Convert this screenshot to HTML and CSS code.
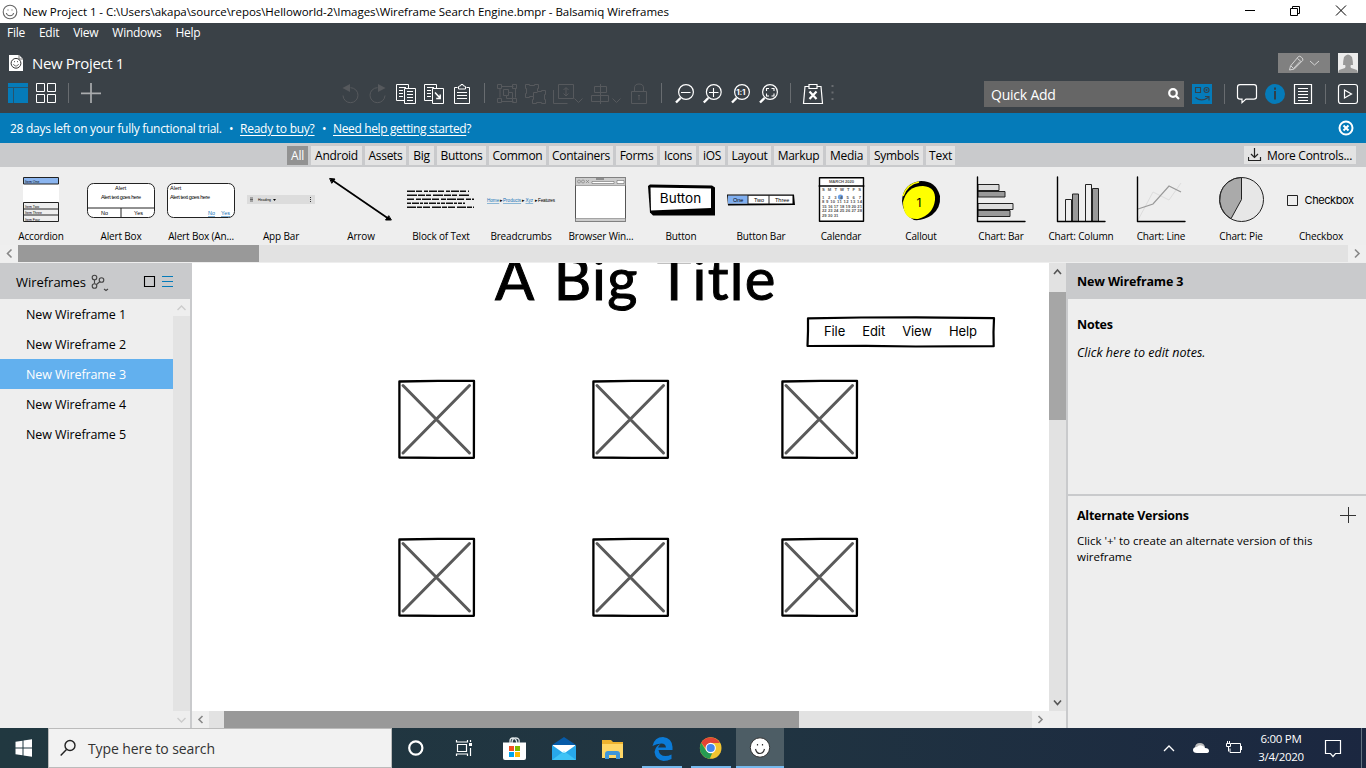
FILE: index.html
```html
<!DOCTYPE html>
<html lang="en">
<head>
<meta charset="utf-8">
<title>New Project 1 - Balsamiq Wireframes</title>
<link rel="stylesheet" href="styles.css">
</head>
<body>
<svg class="defs" width="0" height="0">
  <defs>
    <symbol id="placeholder" viewBox="0 0 78 80"><path class="ink" stroke-width="2.3" fill="#fff" d="M1.400 2.500 40 1.900 76 1.900 75.900 78.800 40 78.800 1.400 78.500Z"/><path d="M5 6.500 71.500 74M71.500 6.500 5 74" fill="none" stroke="#5a5a5a" stroke-width="3" stroke-linecap="round"/></symbol>
    <symbol id="smiley" viewBox="0 0 16 16"><circle cx="8" cy="8" r="6.8"/><path d="M4.300 9c.8 3.600 6.600 3.600 7.400 0M6 5.500v1M10 5.500v1"/></symbol>
  </defs>
</svg>
<div class="app">
  <header class="titlebar">
    <svg class="title-icon" viewBox="0 0 16 16" width="16" height="16"><use href="#smiley" width="16" height="16"/></svg>
    <span class="title-text">New Project 1 - C:\Users\akapa\source\repos\Helloworld-2\Images\Wireframe Search Engine.bmpr - Balsamiq Wireframes</span>
    <svg class="window-buttons" viewBox="1240 0 126 23" width="126" height="23"><path d="M1245 10.500h10M1290.500 8.500h7v7h-7zM1292.500 8v-1.500h7v7H1298M1336 5.500l10 10M1346 5.500l-10 10"/></svg>
  </header>
  <nav class="menubar"><span>File</span><span>Edit</span><span>View</span><span>Windows</span><span>Help</span></nav>
  <div class="project">
    <svg class="doc-icon" viewBox="0 0 14 16" width="14" height="16"><path d="M0 0h10l4 4v12H0z" fill="#fff"/><path d="M10 0v4h4" fill="none" stroke="#777"/><circle cx="7" cy="8.300" r="4.900" fill="none" stroke="#333"/><path d="M4.500 9c.7 2.700 4.300 2.700 5 0M5.500 6v1.200M8.500 6v1.200" fill="none" stroke="#444" stroke-width=".8"/></svg>
    <span class="project-name">New Project 1</span>
    <svg class="user-tools" viewBox="1278 53 80 20" width="80" height="20"><path fill="#808080" d="M1278 53h52v20h-52z"/><g fill="none" stroke="#d5d5d5"><path d="M1289.500 70l1-4 8-9.500q1-1 3 .8t1.300 3l-8.500 8.700zM1297.500 58.500l3.500 3M1291 66l2.500 2.500 6.500-7"/><path d="M1310 61l4.500 4 4.500-4"/></g><path fill="#ececec" d="M1338 53h20v20h-20z"/><path fill="#999" d="M1344 57q4-5 8 0 1 4 1 8h-2q-1 1 0 3l6 2 1 3h-20l1-3 6-2q1-2 0-3h-2q0-4 1-8z"/></svg>
  </div>
  <div class="toolbar">
    <svg class="tools-view" viewBox="8 80 96 28" width="96" height="28"><path fill="#057bb9" d="M8 83h20v20H8z"/><path d="M8 87.500h20M13.500 88v15" stroke="#27536d"/><path fill="none" stroke="#fff" d="M36.500 83.500h8v8h-8zM47.500 83.500h8v8h-8zM36.500 94.500h8v8h-8zM47.500 94.500h8v8h-8z"/><path d="M68.500 83v20" stroke="#686c70"/><path d="M81 93.300h20M91 83v20" stroke="#aaacae" stroke-width="1.700"/></svg>
    <svg class="tools-edit" viewBox="340 80 500 28" width="500" height="28">
      <g class="faint"><path d="M343 95.500a7.500 7.500 0 1 0 7.500-7.800M385 95.500a7.500 7.500 0 1 1-7.500-7.800"/><path fill="#56595d" stroke="none" d="M350 84v8l-7.500-4zM378 84v8l7.500-4z"/></g>
      <g class="line"><path d="M404 100.500h-7.500v-16h12v4M399 87.500h7M399 90.500h4M399 93.500h4M399 96.500h4M404.500 88.500h11v15h-11zM407 91.500h6M407 94.500h6M407 97.500h6M407 100.500h6"/><path d="M432 100.500h-7.500v-16h12v4M427 87.500h7M427 90.500h4M427 93.500h4M427 96.500h4M432.500 88.500h11v15h-11z"/><path stroke-width="1.500" d="M435 92.500l5 5.500M440.200 94.500v4h-4"/><path d="M457.500 87.500h-3v16h15v-16h-3M458.500 86.500l2.500-1v-1h2v1l2.500 1v2.500h-7zM457 92.500h10M457 95.500h10M457 98.500h10"/></g>
      <path class="sep" d="M484.500 83v20M661.500 83v20M790.500 83v20"/>
      <g class="faint"><path d="M501.500 86.500h12M500 88.500v9M515.500 88.500v9M501.500 101.500h12M497.500 84.500h4v4h-4zM512.500 84.500h4v4h-4zM497.500 98.500h4v4h-4zM512.500 98.500h4v4h-4zM503.500 89.500h5v3h4v6h-6v-3h-3zM508.500 92.500v3h-2"/><path d="M525.500 84.500h4v1h5v-1h4v4h-1v3h4v-1h4v4h-1v5h1v4h-4v-1h-5v1h-4v-4h1v-3h-4v1h-4v-4h1v-5h-1zM533.500 96.500v-4h4"/><path d="M558.500 84.500h15v14h-15zM553.500 90v13.500h14M566 88v7M563.500 90l2.500-2.500 2.500 2.500M563.500 93.500l2.500 2.500 2.500-2.500M574.500 98.500l4 4 4-4"/><path d="M600.500 84v20M594.500 86.500h12v6h-12zM591.500 95.500h17v6h-17zM612.500 98.500l4 4 4-4M631.500 91.500h15v12h-15zM634.500 91v-3q0-4 4.500-4t4.500 4v3M639 96v4M638 95.500h2"/></g>
      <g class="line glass"><circle cx="686" cy="92" r="7.400"/><circle cx="713.800" cy="92" r="7.400"/><circle cx="742" cy="92" r="7.400"/><circle cx="770" cy="92" r="7.400"/><path stroke-width="1.100" d="M681 92.500h9.500M709 92.500h9.500M713.500 88v9M766.500 91v-2.500h2.500M771.500 88.500h2.500v2.500M774 93.500v2.500h-2.500M769 96h-2.500v-2.500"/><path stroke-width="2.400" d="M680.500 98l-4.500 4.500M708.300 98l-4.500 4.500M736.500 98l-4.500 4.500M764.500 98l-4.500 4.500"/></g><text x="736.300" y="95" class="one-one">1:1</text>
      <g class="line"><path stroke-width="1.200" d="M809 86.500h-4l-1.500 17h19L821 86.500h-4M809 84.500h8v4h-8z"/><path stroke-width="2.200" d="M809.500 91.500l7 7.500M816.500 91.500l-7 7.500"/></g><path d="M832.500 85v15" stroke="#686c70" stroke-width="2" stroke-dasharray="2 4.500"/>
    </svg>
    <div class="quick-add"><span>Quick Add</span><svg width="12" height="14" viewBox="0 0 12 14"><circle cx="5" cy="6" r="3.800"/><path d="M8 9l3 3"/></svg></div>
    <svg class="tools-right" viewBox="1192 80 166 28" width="166" height="28"><path fill="#057bb9" d="M1192 84h20v20h-20z"/><g fill="none" stroke="#34424b" stroke-width="1.100"><path d="M1195.500 87.500h5v5h-5zM1195.500 97.500q6 5 13.500-.5M1205 96.500h4v4"/><circle cx="1206.500" cy="90" r="2.500"/><circle cx="1206.500" cy="90" r=".5"/></g><path class="sep" d="M1224.500 84v20M1325.500 84v20"/><g fill="none" stroke="#fff" stroke-width="1.200"><path d="M1240 84.600h14q2.500 0 2.500 2.500v10q0 2-2.500 2h-8l-4 3.500v-3.500h-2q-2.500 0-2.500-2v-10q0-2.500 2.500-2.500zM1294.500 84.500h17v19h-17z"/><path stroke-width="1" d="M1298 88.500h10M1298 91.500h10M1298 94.500h10M1298 97.500h10M1298 100.500h10"/><rect x="1338.500" y="84.500" width="19" height="19" rx="2.500"/><path d="M1344.500 90l7 4-7 4z"/></g><circle cx="1275" cy="94" r="10" fill="#057bb9"/><path fill="none" stroke="#303f49" stroke-width="2" d="M1275 87.500v2.200M1275 91v8.500"/></svg>
  </div>
  <div class="trial"><span class="trial-days">28 days left on your fully functional trial.</span><span class="dot">•</span><u class="buy">Ready to buy?</u><span class="dot">•</span><u class="help">Need help getting started</u><span>?</span><svg class="trial-close" width="16" height="16" viewBox="0 0 16 16"><circle cx="8" cy="8" r="6.500"/><path d="M5.500 5.500l5 5M10.500 5.500l-5 5"/></svg></div>
  <div class="categories">
    <span class="tab all">All</span><span class="tab w51">Android</span><span class="tab w41">Assets</span><span class="tab w25">Big</span><span class="tab w49">Buttons</span><span class="tab w57">Common</span><span class="tab w64">Containers</span><span class="tab w41">Forms</span><span class="tab w36">Icons</span><span class="tab w26">iOS</span><span class="tab w43">Layout</span><span class="tab w49">Markup</span><span class="tab w41">Media</span><span class="tab w53">Symbols</span><span class="tab w29">Text</span>
    <span class="more"><svg width="14" height="14" viewBox="0 0 14 14"><path d="M.5 9v3.500h12V9M6.500 0v9M3 6l3.500 3.500L10 6"/></svg>More Controls...</span>
  </div>
  <div class="palette">
    <div class="item"><svg viewBox="0 0 80 58"><path fill="#fff" d="M22 5h36v45H22z"/><path fill="#8bb5ef" class="thin" d="M22.500 5.500h35v6.500h-35z"/><path fill="#eee" class="thin" d="M22.500 30.500h35v19h-35zM22 37h36M22 43h36"/><g class="tiny"><text x="24" y="10.500">Item One</text><text x="24" y="35.500">Item Two</text><text x="24" y="42">Item Three</text><text x="24" y="48.500">Item Four</text></g></svg><span>Accordion</span></div>
    <div class="item"><svg viewBox="0 0 80 58"><rect x="6.500" y="11.500" width="67" height="34" rx="6" fill="#fff" class="thin"/><path class="thin" d="M6.500 36h67M40 36v9"/><g class="small"><text x="34" y="18">Alert</text><text x="20" y="27" textLength="40">Alert text goes here</text><text x="20" y="43">No</text><text x="53" y="43">Yes</text></g></svg><span>Alert Box</span></div>
    <div class="item"><svg viewBox="0 0 80 58"><rect x="6.500" y="11.500" width="67" height="34" rx="6" fill="#fff" class="thin"/><g class="small"><text x="9" y="18">Alert</text><text x="9" y="27" textLength="40">Alert text goes here</text><text x="47" y="43" class="link">No</text><text x="60" y="43" class="link">Yes</text></g></svg><span>Alert Box (An...</span></div>
    <div class="item"><svg viewBox="0 0 80 58"><path fill="#dcdcdc" d="M6 23h68v9H6z"/><path d="M9 26h3M9 27.500h3M9 29h3" stroke="#333" stroke-width=".7"/><path d="M69.500 25v5" stroke="#333" stroke-dasharray="1 1"/><g class="tiny"><text x="17" y="29">Heading</text><path d="M32 27h3l-1.500 2z"/></g></svg><span>App Bar</span></div>
    <div class="item"><svg viewBox="0 0 80 58"><path d="M11 8l57 39" class="ink" stroke-width="1.700"/><path d="M9 6.500l5 .5-3 4zM70 48l-5.500 0 3-4z" class="ink" stroke-width="1" fill="#000"/></svg><span>Arrow</span></div>
    <div class="item"><svg viewBox="0 0 80 58"><g stroke="#111" stroke-width="1.600"><path d="M6 19.300h62" stroke-dasharray="8 1 6 2 4 1"/><path d="M6 23.300h62" stroke-dasharray="10 1 7 1 5 2"/><path d="M6 27.300h67" stroke-dasharray="7 2 5 1 9 1"/><path d="M6 31.300h58" stroke-dasharray="4 1 7 1 3 1"/><path d="M6 35.300h67" stroke-dasharray="9 1 5 1 7 2"/></g></svg><span>Block of Text</span></div>
    <div class="item"><svg viewBox="0 0 80 58"><g class="crumb"><text x="6" y="30" class="link">Home</text><text x="18.500" y="30">▸</text><text x="22" y="30" class="link">Products</text><text x="40.500" y="30">▸</text><text x="44.500" y="30" class="link">Xyz</text><text x="53.500" y="30">▸</text><text x="57" y="30" textLength="17">Features</text></g></svg><span>Breadcrumbs</span></div>
    <div class="item"><svg viewBox="0 0 80 58"><path fill="#fff" stroke="#555" d="M14.500 5.500h50v44h-50z"/><path fill="#ccc" stroke="#777" stroke-width=".6" d="M14.500 5.500h50v8h-50zM14.500 46.500h50v3h-50z"/><path stroke="#555" stroke-width=".5" fill="#fff" d="M31 9.500h22v2H31zM56 8.500h7v3h-7z"/><g fill="none" stroke="#777" stroke-width=".6"><circle cx="18" cy="9.500" r="1.500"/><circle cx="22" cy="9.500" r="1.500"/><path d="M25 8l3 3M28 8l-3 3"/></g><path d="M35 7h8" stroke="#333" stroke-width=".8"/></svg><span>Browser Win...</span></div>
    <div class="item"><svg viewBox="0 0 80 58"><path fill="#000" d="M7 14l2-1.500 62 1 3 2V43.500l-62 0-3-3z"/><path fill="#fff" d="M9.500 15.500l60.500 1v19.500L10 38.500z"/><text x="39.500" y="31.300" class="button-text">Button</text></svg><span>Button</span></div>
    <div class="item"><svg viewBox="0 0 80 58"><path fill="#000" d="M6 22.500h67l1 10.500-67 .5z"/><path fill="#fff" d="M7 23.700h64.500v7.800H7z"/><path fill="#80aff0" d="M7 23.700h20v7.800H7z"/><path class="thin" d="M27 23v9M48 23v9"/><g class="small"><text x="12" y="29.700">One</text><text x="33" y="29.700">Two</text><text x="54" y="29.700">Three</text></g></svg><span>Button Bar</span></div>
    <div class="item"><svg viewBox="0 0 80 58"><path fill="#fff" class="ink" stroke-width="1.400" d="M18.500 5.700h44v43.600h-44zM18 14h45"/><circle cx="39.500" cy="25" r="2.600" fill="#6b9fe4"/><g class="month"><text x="28" y="11" textLength="25">MARCH 2020</text><text x="21" y="19" textLength="39">S  M  T  W  T  F  S</text><text x="21" y="26.500" textLength="39">1  2  3  4  5  6  7</text><text x="21" y="31" textLength="40">8 9 10 11 12 13 14</text><text x="21" y="35.500" textLength="40">15 16 17 18 19 20 21</text><text x="21" y="40" textLength="40">22 23 24 25 26 27 28</text><text x="21" y="44.500">29 30 31</text></g></svg><span>Calendar</span></div>
    <div class="item"><svg viewBox="0 0 80 58"><path d="M21 29q1-18 19-20 15 0 19 15 1 12-8 19-9 6-18 5-11-5-12-19z"/><path fill="#ff0" d="M22 30q4-16 20-16 13 1 12 14-2 15-17 19-15 1-15-17z"/><path fill="none" stroke="#ff0" stroke-width="1.600" d="M22 24q4-12 16-14"/><text x="38" y="34.500" class="call-one">1</text></svg><span>Callout</span></div>
    <div class="item"><svg viewBox="0 0 80 58"><path fill="#ddd" class="thin" d="M17 12.500h21v6H17zM17 31.500h35v6H17z"/><path fill="#999" class="thin" d="M17 19.500h27v5.500H17zM17 38.500h32v6H17z"/><path class="ink" stroke-width="1.400" fill="none" d="M16.500 5v44.500H64"/></svg><span>Chart: Bar</span></div>
    <div class="item"><svg viewBox="0 0 80 58"><path fill="#eee" class="thin" d="M24.500 27.500h6v22h-6zM44.500 12.500h6v37h-6z"/><path fill="#999" class="thin" d="M31.500 22h6v27.500h-6zM51.500 16.500h6v33h-6z"/><path class="ink" stroke-width="1.400" fill="none" d="M16.500 5v44.500H64"/></svg><span>Chart: Column</span></div>
    <div class="item"><svg viewBox="0 0 80 58"><path fill="none" stroke="#ddd" d="M17 48l15-28 16 8 12-17"/><path fill="none" stroke="#999" stroke-width="1.200" d="M17 37l15-5 16-18 12 6"/><path class="ink" stroke-width="1.400" fill="none" d="M16.500 5v44.500H64"/></svg><span>Chart: Line</span></div>
    <div class="item"><svg viewBox="0 0 80 58"><circle cx="40.500" cy="27.500" r="22" fill="#e7e7e7" class="thin"/><path fill="#aaa" class="thin" d="M40.500 5.500v22L30 46.700A22 22 0 0 1 40.500 5.500z"/></svg><span>Chart: Pie</span></div>
    <div class="item"><svg viewBox="0 0 80 58"><path fill="#eee" class="thin" d="M6.500 23.500h10v10h-10z"/><text x="23.500" y="32" class="check-text" textLength="49.500">Checkbox</text></svg><span>Checkbox</span></div>
  </div>
  <div class="palette-scroll"><svg class="arrow" viewBox="0 0 17 17"><path d="M11 4.500l-4 4 4 4"/></svg><i></i><svg class="arrow end" viewBox="0 0 17 17"><path d="M6.500 4.500l4 4-4 4"/></svg></div>
  <main class="workspace">
    <aside class="sidebar">
      <div class="sidebar-head"><span>Wireframes</span><svg viewBox="90 272 88 20" width="88" height="20"><g fill="none" stroke="#444" stroke-width="1.100"><circle cx="94.500" cy="277.500" r="2.300"/><circle cx="94.500" cy="286" r="2.300"/><circle cx="101.500" cy="280" r="2.300"/><path d="M94.500 280v3.500M96.500 284.500l3.500-3M104 289l2 1.500 2-1.500"/></g><path fill="none" stroke="#000" stroke-width="1.100" d="M144.500 276.500h10v10h-10z"/><path stroke="#057bb9" stroke-width="1.100" d="M162 276.500h11M162 281.500h11M162 286.500h11"/></svg></div>
      <div class="sidebar-body">
        <ul><li>New Wireframe 1</li><li>New Wireframe 2</li><li class="selected">New Wireframe 3</li><li>New Wireframe 4</li><li>New Wireframe 5</li></ul>
        <div class="side-scroll"><svg viewBox="0 0 17 17"><path d="M4.500 11l4-4 4 4"/></svg><svg viewBox="0 0 17 17"><path d="M4.500 7l4 4 4-4"/></svg></div>
      </div>
    </aside>
    <section class="canvas-area">
      <div class="canvas">
        <div class="big-title">A Big Title</div>
        <div class="sketch-menu"><svg viewBox="0 0 190 32" width="190" height="32"><path class="ink" fill="#fff" stroke-width="2.200" d="M2 2.300L55 1.500 110 1.300 188 2.200 187.500 16 187.700 30.200 110 30.500 60 29.800 1.500 30 2 15z"/></svg><span>File</span><span>Edit</span><span>View</span><span>Help</span></div>
        <div class="pictures"><svg><use href="#placeholder"/></svg><svg><use href="#placeholder"/></svg><svg><use href="#placeholder"/></svg><svg><use href="#placeholder"/></svg><svg><use href="#placeholder"/></svg><svg><use href="#placeholder"/></svg></div>
      </div>
      <div class="v-scroll"><svg viewBox="0 0 17 29" height="29"><path d="M5 11l3.500-4 3.500 4"/></svg><i></i><svg viewBox="0 0 17 17" height="17"><path d="M5 6.500l3.500 4 3.500-4"/></svg></div>
      <div class="h-scroll"><svg class="arrow" viewBox="0 0 17 17"><path d="M10.500 5l-3.500 3.500 3.500 3.500"/></svg><i></i><svg class="arrow end" viewBox="0 0 17 17"><path d="M6.500 5l3.500 3.500-3.500 3.500"/></svg></div>
      <div class="corner"></div>
    </section>
    <aside class="inspector">
      <h2>New Wireframe 3</h2>
      <div class="notes"><h3>Notes</h3><p>Click here to edit notes.</p></div>
      <div class="versions"><div class="versions-head"><h3>Alternate Versions</h3><svg width="16" height="16" viewBox="0 0 16 16"><path d="M0 8.500h16M8.500 0v16" stroke="#333"/></svg></div><p>Click '+' to create an alternate version of this wireframe</p></div>
    </aside>
  </main>
  <footer class="taskbar">
    <svg class="start" viewBox="0 0 48 40"><path fill="#fff" d="M15.500 13.700l7-1v6.700h-7zM23.500 12.500l8.500-1.200v8.100h-8.500zM15.500 20.500h7v6.700l-7-1zM23.500 20.500H32v8.200l-8.500-1.200z"/></svg>
    <div class="search"><svg width="16" height="18" viewBox="0 0 16 18"><circle cx="10" cy="6.500" r="5"/><path d="M6.500 10.500L.7 16.500"/></svg><span>Type here to search</span></div>
    <svg class="pinned" viewBox="392 0 392 40">
      <circle cx="415.800" cy="20" r="6.600" fill="none" stroke="#fff" stroke-width="2.200"/>
      <path fill="none" stroke="#fff" stroke-width="1.200" d="M457.500 16.500h9v7h-9zM456.500 12v2h11v-2M456.500 28v-2h11v2M470.500 12v2M470.500 20v8"/><path fill="#fff" d="M469 15h3v3h-3z"/>
      <path fill="none" stroke="#dfe6e8" stroke-width="1.300" d="M510 15v-2q0-3 3-3t4 5M512 15q0-5 4-5t3 5"/><path fill="#fff" d="M503 14.500h23V30q0 2-2 2h-19q-2 0-2-2z"/><path fill="#f25022" d="M509 18h5v5h-5z"/><path fill="#7fba00" d="M515 18h5v5h-5z"/><path fill="#00a4ef" d="M509 24h5v5h-5z"/><path fill="#ffb900" d="M515 24h5v5h-5z"/>
      <path fill="#075ba8" d="M552 17l12-8 12 8v7h-24z"/><path fill="#fff" d="M553 17h22v8h-22z"/><path fill="#28a8ea" d="M552 17l12 8.500L576 17v15h-24z"/><path fill="#50d9ff" d="M552 32l12-9 12 9z" opacity=".55"/>
      <path fill="#eeb32f" d="M602 12h9l2 2h10v16h-21z"/><path fill="#ffd767" d="M602 16h21v14h-21z"/><path fill="#3e96da" d="M605 31v-5q0-3 3-3h9q3 0 3 3v5h-4v-4h-7v4z"/>
      <path fill="#0b7bd7" d="M652.500 18q2-9 10.500-9 9 1 9.500 10v3h-14q1 6 7 6 3 0 6-1.500v4.500q-4 2-8 2-8-1-9-9 1-6 6-8-2 2-2.500 3.500h8q-.5-4-4.500-4-5 0-9 2.500z"/>
      <circle cx="710.700" cy="20" r="10.800" fill="#f2c431"/><path fill="#e34435" d="M701.200 14.800A10.800 10.800 0 0 1 720 15h-9.300l-3.500 7z"/><path fill="#269b53" d="M701.200 14.800l5 8 4.500 2.500 1.500 0-2.500 5.500A10.800 10.800 0 0 1 701.200 14.800z"/><circle cx="710.700" cy="20" r="5.200" fill="#fff"/><circle cx="710.700" cy="20" r="4.100" fill="#4386ef"/>
      <path fill="#4d5d65" d="M736 0h48v40h-48z"/><circle cx="760" cy="19.500" r="9.700" fill="#fff" stroke="#333"/><path fill="none" stroke="#333" stroke-width="1.200" d="M755.500 21q1 4.500 4.500 4.500t4.500-4.500M757.500 16v1.500M762.500 16v1.500"/>
      <path fill="#76b9ed" d="M642 38h40v2h-40zM691 38h40v2h-40zM736 38h48v2h-48z"/>
    </svg>
    <svg class="tray" viewBox="1160 0 90 40"><path fill="none" stroke="#fff" stroke-width="1.300" d="M1164 23l5-5 5 5"/><path fill="#bbb" d="M1195 20q0-5 5-5 4 0 5 4l-5 4-6 0z"/><path fill="#fff" d="M1197 25q-4 0-4-3t4-3q2-3 6-1 2 1 2 2 4 0 4 3 0 2-3 2z"/><path fill="none" stroke="#fff" d="M1231 15.500h9.500v9h-10.500v-4M1226.500 15.500h4v3h-4zM1227.500 13v2.500M1229.500 13v2.500M1228.500 18.500v5M1241.500 18v4"/></svg>
    <div class="clock"><span>6:00 PM</span><span>3/4/2020</span></div>
    <svg class="notify" viewBox="1312 0 54 40"><path fill="none" stroke="#fff" stroke-width="1.200" d="M1325.500 12.500h15v13h-5l-2.500 3-2.500-3h-5z"/><path d="M1361.500 0v40" stroke="#647381"/></svg>
  </footer>
</div>
</body>
</html>
```
FILE: styles.css
```css
* { box-sizing: border-box; }
body { margin: 0; overflow: hidden; font-family: "Open Sans", "Noto Sans", sans-serif; font-size: 12px; color: #000; }
svg { display: block; flex: none; }
.defs { position: absolute; }
.app { width: 1366px; height: 768px; display: flex; flex-direction: column; }
.app > * { flex: none; }
.ink { stroke: #000; stroke-linejoin: round; stroke-linecap: round; }
.thin { stroke: #222; stroke-width: 1; }

.titlebar { height: 23px; background: #fff; display: flex; align-items: center; padding-left: 2px; }
.title-icon { fill: none; stroke: #666; stroke-width: 1.1; margin-right: 5px; }
.title-text { font-size: 11.5px; letter-spacing: -.05px; white-space: nowrap; }
.window-buttons { margin-left: auto; fill: none; stroke: #000; }
.menubar { height: 20px; background: #3a4147; color: #fff; display: flex; align-items: center; gap: 14px; padding: 0 0 2px 7px; font-size: 12px; letter-spacing: -.27px; }
.project { height: 38px; background: #3a4147; color: #fff; display: flex; align-items: center; padding: 2px 8px 0 9px; }
.project-name { margin-left: 9px; font-size: 15px; letter-spacing: -.35px; }
.user-tools { margin-left: auto; }
.toolbar { height: 32px; background: #3a4147; display: flex; padding-left: 8px; }
.toolbar > svg { margin-top: -1px; }
.tools-edit { margin-left: 236px; }
.faint { fill: none; stroke: #56595d; stroke-width: 1; }
.line { fill: none; stroke: #fff; stroke-width: 1; }
.glass { stroke-width: 1.2; }
.sep { stroke: #686c70; }
.one-one { font: bold 8px Inter, sans-serif; fill: #fff; letter-spacing: -.2px; }
.quick-add { width: 200px; height: 26px; margin-left: 144px; background: #666; color: #fff; display: flex; align-items: center; justify-content: space-between; padding: 0 4px 0 7px; font-size: 14px; letter-spacing: -.22px; }
.quick-add svg { fill: none; stroke: #fff; stroke-width: 2.200; }
.tools-right { margin-left: 8px; }
.trial { height: 30px; background: #057bb9; color: #fff; display: flex; align-items: center; padding: 0 12px 0 10px; font-size: 12px; letter-spacing: -.28px; }
.dot { width: 18px; padding-left: 7px; }
.trial-days { width: 212px; white-space: nowrap; }
.buy { width: 75px; white-space: nowrap; letter-spacing: -.25px; }
.help { letter-spacing: -.36px; }
.trial u { text-underline-offset: 2px; }
.trial-close { margin-left: auto; fill: none; stroke: #fff; stroke-width: 2; }

.categories { height: 24px; background: #c9cacc; display: flex; gap: 3px; align-items: center; padding-left: 287px; letter-spacing: -.28px; }
.tab { height: 19px; line-height: 19px; background: #e3e3e3; text-align: center; white-space: nowrap; }
.all { width: 21px; background: #929292; color: #fff; }
.w25 { width: 25px; } .w26 { width: 26px; } .w29 { width: 29px; } .w36 { width: 36px; } .w41 { width: 41px; } .w43 { width: 43px; } .w49 { width: 49px; } .w51 { width: 51px; } .w53 { width: 53px; } .w57 { width: 57px; } .w64 { width: 64px; }
.more { margin: 0 10px 0 auto; width: 112px; height: 18px; background: #e3e3e3; display: flex; align-items: center; gap: 5px; padding-left: 4px; white-space: nowrap; }
.more svg { fill: none; stroke: #222; stroke-width: 1.200; }
.palette { height: 78px; background: #eee; display: flex; padding: 5px 0 0 1px; overflow: hidden; }
.item { width: 80px; flex: none; }
.item svg { width: 80px; height: 58px; }
.item span { display: block; text-align: center; font-size: 10px; line-height: 13px; letter-spacing: -.16px; white-space: nowrap; }
.tiny { font: 3.500px "Liberation Sans", sans-serif; }
.small { font: 5.500px "Liberation Sans", sans-serif; }
.crumb { font: 4.600px "Liberation Sans", sans-serif; }
.link { fill: #1673b6; text-decoration: underline; }
.month { font: bold 4.200px "Liberation Sans", sans-serif; fill: #555; white-space: pre; }
.button-text { font: 13.500px Inter, sans-serif; text-anchor: middle; }
.call-one { font: 12px Inter, sans-serif; text-anchor: middle; }
.check-text { font: 11px Inter, sans-serif; }
.palette-scroll { height: 18px; background: #e2e2e2; border-bottom: 1px solid #eee; display: flex; }
.palette-scroll i { width: 241px; background: #999; }
.arrow { width: 17px; height: 17px; background: #efefef; fill: none; stroke: #888; stroke-width: 1.600; }
.palette-scroll .arrow { width: 18px; }
.end { margin-left: auto; }

.workspace { height: 465px; display: flex; }
.sidebar { width: 192px; border-right: 2px solid #c9cacc; background: #eee; display: flex; flex-direction: column; }
.sidebar-head { height: 36px; width: 192px; background: #c9cacc; display: flex; align-items: center; padding: 2px 0 0 16px; font-size: 13px; letter-spacing: -.03px; }
.sidebar-head span { width: 74px; }
.sidebar-body { flex: 1; display: flex; }
ul { width: 173px; list-style: none; margin: 0; padding: 0; }
li { height: 30px; line-height: 30px; padding: 1px 0 0 26px; font-size: 12.500px; letter-spacing: -.1px; }
.selected { background: #62b0ee; color: #fff; }
.side-scroll { width: 17px; background: #e3e3e3; display: flex; flex-direction: column; justify-content: space-between; }
.side-scroll svg { width: 17px; height: 17px; background: #eee; fill: none; stroke: #ccc; stroke-width: 1.400; }
.canvas-area { width: 874px; display: grid; grid-template: 448px 17px / 857px 17px; }
.canvas { background: #fff; overflow: hidden; }
.big-title { margin: -22px 0 0 303px; height: 75px; line-height: 74px; white-space: nowrap; font-family: Lato, sans-serif; font-size: 58px; letter-spacing: 1.300px; word-spacing: 4px; -webkit-text-stroke: 1px #000; stroke-linejoin: round; }
.sketch-menu { position: relative; width: 190px; height: 32px; margin-left: 614px; display: flex; align-items: center; padding: 0 19px 3px 18px; justify-content: space-between; font: 13px Inter, sans-serif; letter-spacing: -.1px; }
.sketch-menu svg { position: absolute; left: 0; top: 0; }
.sketch-menu span { position: relative; }
.pictures { display: grid; grid-template-columns: 194px 189px 78px; row-gap: 78px; margin: 31px 0 0 206px; }
.pictures svg { width: 78px; height: 80px; }
.v-scroll { background: #e2e2e2; display: flex; flex-direction: column; fill: none; stroke: #555; stroke-width: 1.600; }
.v-scroll svg { width: 17px; }
.v-scroll i { height: 128px; background: #a6a6a6; margin-bottom: auto; }
.h-scroll { background: #e2e2e2; display: flex; }
.h-scroll i { width: 575px; margin-left: 15px; background: #999; }
.corner { background: #eee; }
.inspector { width: 300px; background: #eee; border-left: 2px solid #c9cacc; }
.inspector h2 { margin: 0; height: 36px; line-height: 36px; padding: 1px 0 0 9px; background: #c9cacc; font-size: 12.500px; letter-spacing: -.15px; }
.inspector h3 { margin: 0; font-size: 12.500px; line-height: 18px; letter-spacing: -.25px; }
.inspector p { margin: 0; font-size: 11.500px; line-height: 16px; letter-spacing: -.02px; }
.notes { height: 197px; padding: 17px 9px; border-bottom: 2px solid #c9cacc; }
.inspector .notes p { margin-top: 11px; font-style: italic; font-size: 12.500px; letter-spacing: .02px; }
.versions { padding: 11px 10px 0 9px; }
.versions-head { display: flex; justify-content: space-between; }
.inspector .versions p { width: 260px; margin-top: 8px; }

.taskbar { height: 40px; display: flex; background: linear-gradient(90deg, #213840, #203441 55%, #1b2740); color: #fff; }
.start { width: 48px; height: 40px; }
.search { width: 344px; border: 1px solid #bbb; background: #f2f2f2; color: #333; display: flex; align-items: center; gap: 12px; padding-left: 11px; font-size: 14px; letter-spacing: -.1px; }
.search svg { fill: none; stroke: #222; stroke-width: 1.400; }
.pinned { width: 392px; height: 40px; }
.tray { width: 90px; height: 40px; margin-left: 376px; }
.clock { width: 62px; display: flex; flex-direction: column; align-items: center; justify-content: center; font-size: 11.500px; line-height: 18px; letter-spacing: -.3px; }
.notify { width: 54px; height: 40px; }
```
